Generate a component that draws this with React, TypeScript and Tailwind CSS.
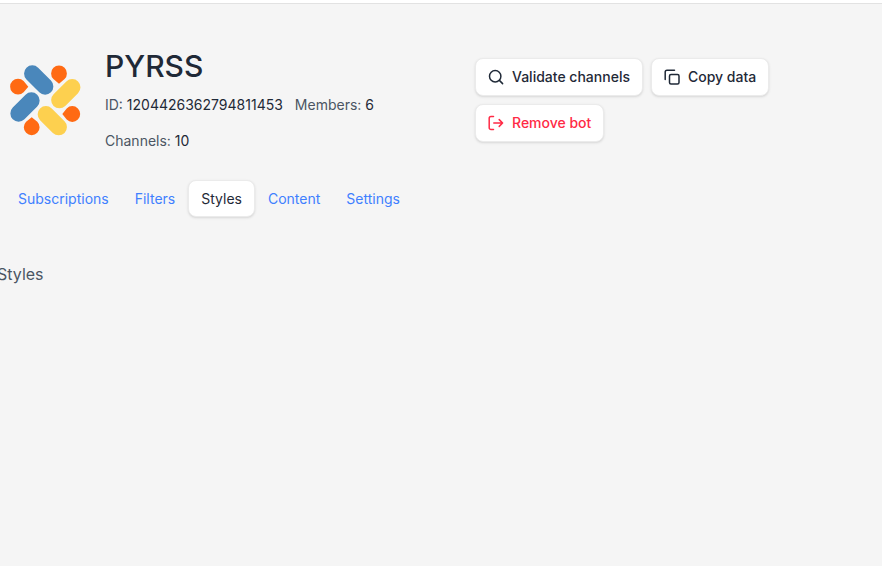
const font = { fontFamily: "Inter, 'Liberation Sans', sans-serif" };

function Logo() {
  return (
    <svg width="72" height="72" viewBox="0 0 72 72" className="shrink-0">
      {/* coordinates are relative to the logo box */}
      <g strokeLinecap="round" strokeWidth="16.5" fill="none">
        <path d="M23.3 8.6 L36.1 21.4" stroke="#4a87bb" />
        <path d="M9.6 48.4 L22.4 35.6" stroke="#4a87bb" />
        <path d="M63.2 22.3 L50.4 35.1" stroke="#fdd04f" />
        <path d="M36.9 49.3 L49.7 62.1" stroke="#fdd04f" />
      </g>
      <g fill="#ff6a13">
        <path d="M50 18.7 L44.4 14 A7.9 7.9 0 1 1 55.6 14 Z" />
        <path d="M19.3 21.7 L14.6 16.1 A7.9 7.9 0 1 0 14.6 27.3 Z" />
        <path d="M53.3 49 L57.7 43.4 A7.9 7.9 0 1 1 57.7 54.6 Z" />
        <path d="M22.7 52.3 L17.1 56.7 A7.9 7.9 0 1 0 28.3 56.7 Z" />
      </g>
    </svg>
  );
}

function SearchIcon() {
  return (
    <svg className="w-4 h-4" fill="none" stroke="currentColor" strokeWidth={1.5} strokeLinecap="round" strokeLinejoin="round" viewBox="0 0 16 16">
      <circle cx="7.2" cy="7.2" r="5.7" />
      <path d="M11.4 11.4 L14.6 14.6" />
    </svg>
  );
}

function CopyIcon() {
  return (
    <svg className="w-4 h-4" fill="none" stroke="currentColor" strokeWidth={1.5} strokeLinecap="round" strokeLinejoin="round" viewBox="0 0 16 16">
      <rect x="5.5" y="5.5" width="9.5" height="9.5" rx="1.5" />
      <path d="M10.5 1.2 H3 A1.8 1.8 0 0 0 1.2 3 V10.5" />
    </svg>
  );
}

function RemoveIcon() {
  return (
    <svg className="w-4 h-4" fill="none" stroke="currentColor" strokeWidth={1.5} strokeLinecap="round" strokeLinejoin="round" viewBox="0 0 16 16">
      <path d="M5.5 1.5 H3 A1.8 1.8 0 0 0 1.2 3.3 V12.7 A1.8 1.8 0 0 0 3 14.5 H5.5" />
      <path d="M5.8 8 H14.6 M11.2 4.6 L14.6 8 L11.2 11.4" />
    </svg>
  );
}

function ActionButton({ icon, label, danger }: { icon: React.ReactNode; label: string; danger?: boolean }) {
  return (
    <button
      className={`h-[38px] flex items-center gap-2 px-3 bg-white border border-[#ebebeb] rounded-lg shadow-sm text-sm font-medium ${
        danger ? 'text-[#ff2a45]' : 'text-[#1f2937]'
      }`}
    >
      {icon}
      <span>{label}</span>
    </button>
  );
}

const tabs = ['Subscriptions', 'Filters', 'Styles', 'Content', 'Settings'];

export default function App() {
  return (
    <div className="h-[566px] w-[882px] overflow-hidden bg-[#f5f5f5]" style={font}>
      <div className="h-1 bg-white border-b border-[#e2e2e2]" />

      <div className="flex items-start pt-[54px] pl-[9px]">
        <div className="pt-[7px]">
          <Logo />
        </div>
        <div className="ml-6 w-[370px]">
          <h1 className="text-[30px] leading-[16px] font-medium text-[#1f2937] h-[29px]">PYRSS</h1>
          <div className="flex flex-wrap gap-x-3 text-sm leading-[36px] text-[#4b5563] w-[300px]">
            <span>
              ID: <span className="text-[#1f2937]">1204426362794811453</span>
            </span>
            <span>
              Members: <span className="text-[#1f2937]">6</span>
            </span>
            <span>
              Channels: <span className="text-[#1f2937]">10</span>
            </span>
          </div>
        </div>
        <div className="flex flex-wrap gap-2 w-[300px]">
          <ActionButton icon={<SearchIcon />} label="Validate channels" />
          <ActionButton icon={<CopyIcon />} label="Copy data" />
          <ActionButton icon={<RemoveIcon />} label="Remove bot" danger />
        </div>
      </div>

      <div className="flex items-center mt-[21px] pl-[5px]">
        {tabs.map((tab) => (
          <button
            key={tab}
            className={`h-[37px] px-3 text-sm rounded-lg border ${
              tab === 'Styles'
                ? 'bg-white border-[#ebebeb] shadow-sm text-[#1f2937]'
                : 'border-transparent text-[#3f80ff]'
            }`}
          >
            {tab}
          </button>
        ))}
      </div>

      <p className="mt-[45px] -ml-[3px] text-base leading-6 text-[#4b5563]">Styles</p>
    </div>
  );
}
